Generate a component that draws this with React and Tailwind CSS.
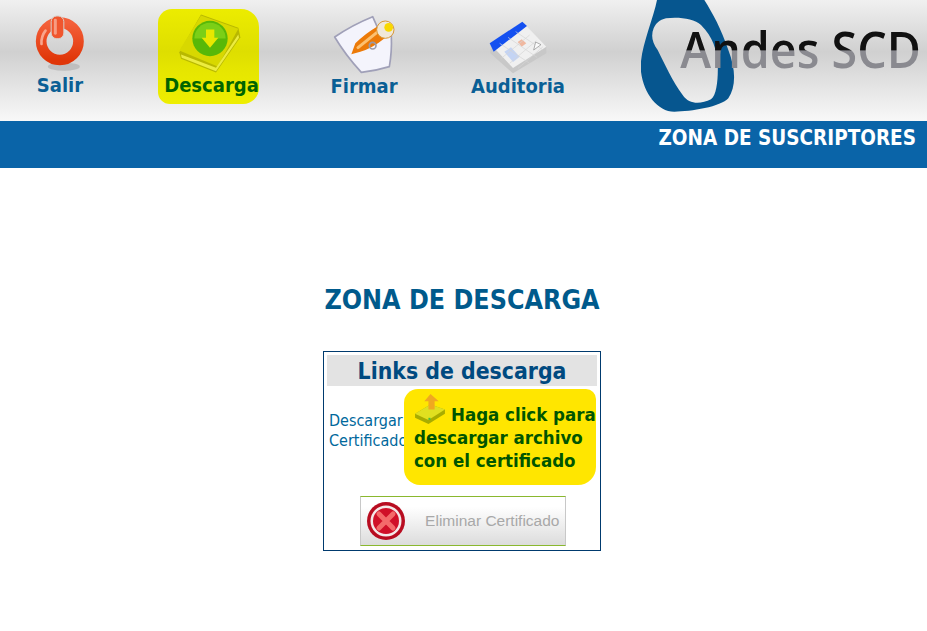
import React from 'react';

function SalirIcon() {
  return (
    <svg viewBox="95 40 170 180" className="w-[57px] h-[60px]">
      <defs>
        <linearGradient id="ringGrad" x1="0" y1="0" x2="0" y2="1">
          <stop offset="0" stopColor="#f4603a" />
          <stop offset="1" stopColor="#e03608" />
        </linearGradient>
      </defs>
      <ellipse cx="190" cy="198" rx="48" ry="12" fill="#b4b4b4" opacity="0.7" />
      <circle cx="178" cy="122" r="56" fill="none" stroke="url(#ringGrad)" strokeWidth="32" />
      <path d="M135 90 a58 58 0 0 0 -12 40" fill="none" stroke="#f9a58c" strokeWidth="8" strokeLinecap="round" />
      <rect x="152" y="46" width="38" height="68" rx="17" fill="#f0562e" stroke="#d8cfc8" strokeWidth="3" />
      <rect x="160" y="54" width="9" height="48" rx="4" fill="#f79c82" />
    </svg>
  );
}

function DescargaIcon() {
  return (
    <svg viewBox="535 45 195 185" className="w-[65px] h-[62px]">
      <path d="M545 165 L610 52 L722 92 L728 120 L655 226 L550 185 Z" fill="#b8b800" />
      <path d="M545 160 L610 55 L722 95 L660 208 Z" fill="#d8d800" />
      <path d="M550 172 L655 212 L722 112 L724 122 L655 222 L552 182 Z" fill="#ecec40" />
      <circle cx="637" cy="124" r="53" fill="#58b808" />
      <path d="M590 124 a47 47 0 0 1 94 0 Z" fill="#84d41c" opacity="0.8" />
      <path d="M625 97 H650 V122 H662 L637 152 L612 122 H625 Z" fill="#e8e800" />
    </svg>
  );
}

function FirmarIcon() {
  return (
    <svg viewBox="90 50 195 180" className="w-[65px] h-[60px]">
      <path d="M98 116 Q150 80 212 55 L232 100 L268 112 Q270 160 262 205 Q220 218 178 222 Q130 170 98 116 Z" fill="#f4f4fc" stroke="#a0a0b8" strokeWidth="5" strokeLinejoin="round" />
      <path d="M148 168 L160 135 Q190 105 225 85 L250 118 Q210 150 175 160 Z" fill="#ec7a08" />
      <path d="M168 148 L225 102" stroke="#fcc070" strokeWidth="9" strokeLinecap="round" />
      <circle cx="250" cy="94" r="26" fill="#f0e8d8" stroke="#d89838" strokeWidth="3" />
      <circle cx="260" cy="87" r="13" fill="#f8d800" />
      <circle cx="212" cy="142" r="10" fill="none" stroke="#9a9aa8" strokeWidth="5" />
    </svg>
  );
}

function AuditoriaIcon() {
  return (
    <svg viewBox="565 60 180 165" className="w-[60px] h-[55px]">
      <path d="M572 148 L668 78 L740 140 L740 160 L640 220 L572 160 Z" fill="#c8c8c8" />
      <path d="M572 132 L668 65 L740 140 L640 204 Z" fill="#f0f0f0" />
      <path d="M570 130 L668 65 L682 78 L582 155 Z" fill="#1450f0" />
      <path d="M614 155 L634 142 L660 170 L640 186 Z" fill="#c4d4f4" />
      <path d="M654 126 L666 118 L680 130 L666 140 Z" fill="#f0b8a0" />
      <path d="M600 130 L690 190 M625 112 L712 172 M648 95 L730 150 M605 175 L690 105 M630 190 L710 122 M655 205 L730 140" stroke="#d4d4d4" strokeWidth="2" />
      <path d="M702 150 L708 126 L724 134 Z" fill="#fafafa" stroke="#8a8a8a" strokeWidth="2" />
    </svg>
  );
}

function AndesLogo() {
  return (
    <svg viewBox="0 0 858 363" className="w-[286px] h-[121px]">
      <defs>
        <linearGradient id="logoText" x1="0" y1="90" x2="0" y2="210" gradientUnits="userSpaceOnUse">
          <stop offset="0" stopColor="#111" />
          <stop offset="0.5" stopColor="#111" />
          <stop offset="0.52" stopColor="#8a8a90" />
          <stop offset="1" stopColor="#8a8a90" />
        </linearGradient>
      </defs>
      <path
        fillRule="evenodd"
        fill="#06568f"
        d="M48 0 C36 60 -8 160 0 215 C8 280 50 335 100 335 C150 335 240 320 262 295 C285 260 285 210 262 150 C240 85 215 40 190 0 Z M38 85 C30 105 32 125 50 150 C70 190 95 245 125 285 C145 315 180 312 210 298 C228 285 232 230 230 190 C228 150 215 110 180 75 C160 55 110 50 75 55 C55 60 45 70 38 85 Z"
      />
      <text
        x="118"
        y="204"
        fontFamily="'Open Sans', sans-serif"
        fontWeight="600"
        fontSize="150"
        fill="url(#logoText)"
        textLength="722"
        lengthAdjust="spacingAndGlyphs"
      >
        Andes SCD
      </text>
    </svg>
  );
}

function NavItem({ icon, label, className, labelClass = '' }) {
  return (
    <a href="#" className={`flex flex-col items-center justify-end ${className}`}>
      {icon}
      <span className={`text-[20px] leading-[23px] font-bold ${labelClass}`}>{label}</span>
    </a>
  );
}

function EliminarIcon() {
  return (
    <svg viewBox="0 0 40 40" className="w-[40px] h-[40px] shrink-0">
      <circle cx="20" cy="20" r="19" fill="#b80c20" />
      <circle cx="20" cy="20" r="15.5" fill="#f4e8e8" />
      <circle cx="20" cy="20" r="13" fill="#d01028" />
      <path d="M13 13 L27 27 M27 13 L13 27" stroke="#f46a6a" strokeWidth="5" strokeLinecap="round" />
    </svg>
  );
}

function StampIcon() {
  return (
    <svg viewBox="0 0 32 32" className="w-[33px] h-[33px] shrink-0">
      <path d="M1 22 L16 13 L30 18 L30 22 L14 32 L1 26 Z" fill="#a8ac00" />
      <path d="M1 22 L16 13 L30 18 L14 28 Z" fill="#e0e020" />
      <path d="M16 3 L24 10 H20 V18 H14 V10 H10 Z" fill="#f0a820" />
      <rect x="14" y="26" width="2" height="2" fill="#40c040" />
    </svg>
  );
}

export default function App() {
  return (
    <div className="min-h-[631px] bg-white font-['DejaVu_Sans_Condensed','DejaVu_Sans',Verdana,sans-serif]">
      {/* Barra superior */}
      <header className="h-[121px] flex overflow-hidden bg-[linear-gradient(#f0f0f0_0%,#d0d0d0_43%,#dcdcdc_60%,#f8f8f8_100%)]">
        <nav className="w-[641px] shrink-0 flex items-start text-[#0a5f95]">
          <NavItem icon={<SalirIcon />} label="Salir" className="w-[60px] ml-[30px] mt-[14px]" />
          <NavItem
            icon={<DescargaIcon />}
            label="Descarga"
            labelClass="ml-[6px]"
            className="w-[101px] h-[95px] ml-[68px] mt-[9px] pb-[7px] rounded-[14px_18px_16px_12px] bg-[linear-gradient(#ecec00,#dede00_45%,#e6e600_65%,#eeee00)] text-[#006400]"
          />
          <NavItem icon={<FirmarIcon />} label="Firmar" className="w-[80px] ml-[65px] mt-[15px]" />
          <NavItem icon={<AuditoriaIcon />} label="Auditoria" className="w-[100px] ml-[64px] mt-[20px]" />
        </nav>
        <AndesLogo />
      </header>

      <div className="h-[47px] bg-[#0a64a8] px-[11px] pt-[5px] text-right text-[20.5px] leading-[24px] font-bold text-white">
        ZONA DE SUSCRIPTORES
      </div>

      <main className="flex flex-col items-center pt-[116px] pr-[3px]">
        <h1 className="text-[26.6px] leading-[32px] font-bold text-[#005a8c]">ZONA DE DESCARGA</h1>

        <section className="w-[278px] h-[200px] mt-[35px] border border-[#003a6e] p-[3px]">
          <h2 className="h-[31px] bg-[#e3e3e3] text-center text-[22.8px] leading-[32px] font-bold text-[#004a80]">
            Links de descarga
          </h2>
          <div className="flex mt-[3px] h-[96px]">
            <a href="#" className="w-[77px] shrink-0 pl-[2px] pt-[22px] text-[16px] leading-[20px] text-[#00689c] whitespace-nowrap">
              Descargar
              <br />
              Certificado
            </a>
            <a
              href="#"
              className="w-[192px] h-[96px] pl-[10px] pt-[1px] rounded-[14px_10px_18px_16px] bg-[#ffe600] text-[18.5px] leading-[23px] font-bold text-[#005500] whitespace-nowrap"
            >
              <span className="flex items-end h-[34px]">
                <StampIcon />
                <span className="ml-[4px] mb-[-2px]">Haga click para</span>
              </span>
              <span className="block mt-[2px]">descargar archivo</span>
              <span className="block">con el certificado</span>
            </a>
          </div>
          <div className="flex justify-center mt-[11px] pl-[1px]">
            <button className="w-[206px] h-[50px] flex items-center pl-[5px] pr-[5px] justify-between border-y border-y-[#8ab82e] border-x border-x-[#c8c8c8] bg-[linear-gradient(#ffffff_20%,#dcdcdc_100%)] font-['Liberation_Sans',sans-serif] text-[15.5px] text-[#a8a8a8]">
              <EliminarIcon />
              Eliminar Certificado
            </button>
          </div>
        </section>
      </main>
    </div>
  );
}
